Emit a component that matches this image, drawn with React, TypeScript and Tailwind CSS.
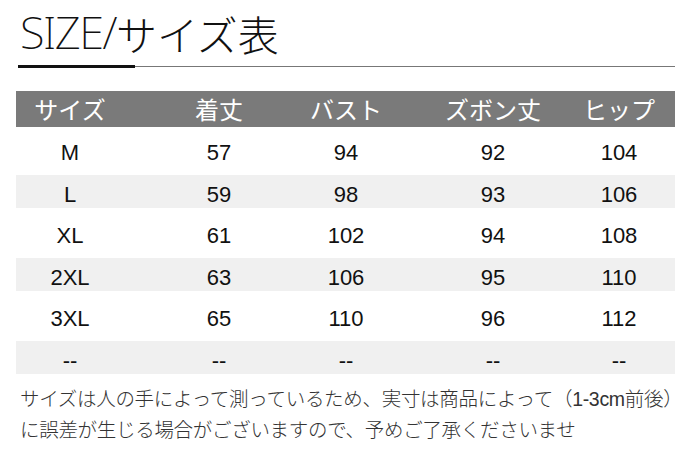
import React from "react";

const rows = [
  ["M", "57", "94", "92", "104"],
  ["L", "59", "98", "93", "106"],
  ["XL", "61", "102", "94", "108"],
  ["2XL", "63", "106", "95", "110"],
  ["3XL", "65", "110", "96", "112"],
  ["--", "--", "--", "--", "--"],
];

const headers = ["サイズ", "着丈", "バスト", "ズボン丈", "ヒップ"];

// column widths chosen so each cell's centre lands where the picture has it
const cols = "grid grid-cols-[108px_190px_64px_230px_22px]";

export default function App() {
  return (
    <div className="w-[700px] h-[456px] bg-white overflow-hidden">
      {/* title */}
      <div className="pl-[20px] h-[54px] flex items-end text-[#111] font-['Noto_Sans','Noto_Sans_CJK_JP',sans-serif] font-extralight leading-none">
        <span className="text-[45px] tracking-[-1.5px]">SIZE/</span>
        <span className="text-[41px] font-['Noto_Sans_CJK_JP',sans-serif] font-extralight">サイズ表</span>
      </div>
      <div className="flex items-center mt-[11px] ml-[18px] w-[657px]">
        <div className="w-[117px] h-[3px] bg-[#111]" />
        <div className="flex-1 h-px bg-[#777]" />
      </div>

      {/* table */}
      <div className="ml-[16px] mt-[23px] w-[659px]">
        <div className={`${cols} h-[36px] bg-[#7a7a7a] items-center`}>
          {headers.map((h) => (
            <div key={h} className="flex justify-center whitespace-nowrap text-white text-[24px] font-normal font-['Noto_Sans_CJK_JP',serif]">
              {h}
            </div>
          ))}
        </div>
        <div className="flex flex-col gap-[8px] pt-[6px]">
          {rows.map((r, i) => (
            <div
              key={i}
              className={`${cols} h-[33.5px] items-center ${i % 2 === 1 ? "bg-[#f0f0f0]" : ""}`}
            >
              {r.map((c, j) => (
                <div key={j} className="flex justify-center pt-[3px] whitespace-nowrap text-[22px] text-[#111] font-['Liberation_Sans',sans-serif]">
                  {c}
                </div>
              ))}
            </div>
          ))}
        </div>
      </div>

      {/* note */}
      <div className="pl-[20px] pt-[9px] text-[19.5px] leading-[30px] tracking-[-0.3px] text-[#333] whitespace-nowrap font-['Noto_Sans_CJK_JP',sans-serif] font-light">
        <p>サイズは人の手によって測っているため、実寸は商品によって（<span className="font-['Liberation_Sans',sans-serif]">1-3cm</span>前後）</p>
        <p>に誤差が生じる場合がございますので、予めご了承くださいませ</p>
      </div>
    </div>
  );
}
